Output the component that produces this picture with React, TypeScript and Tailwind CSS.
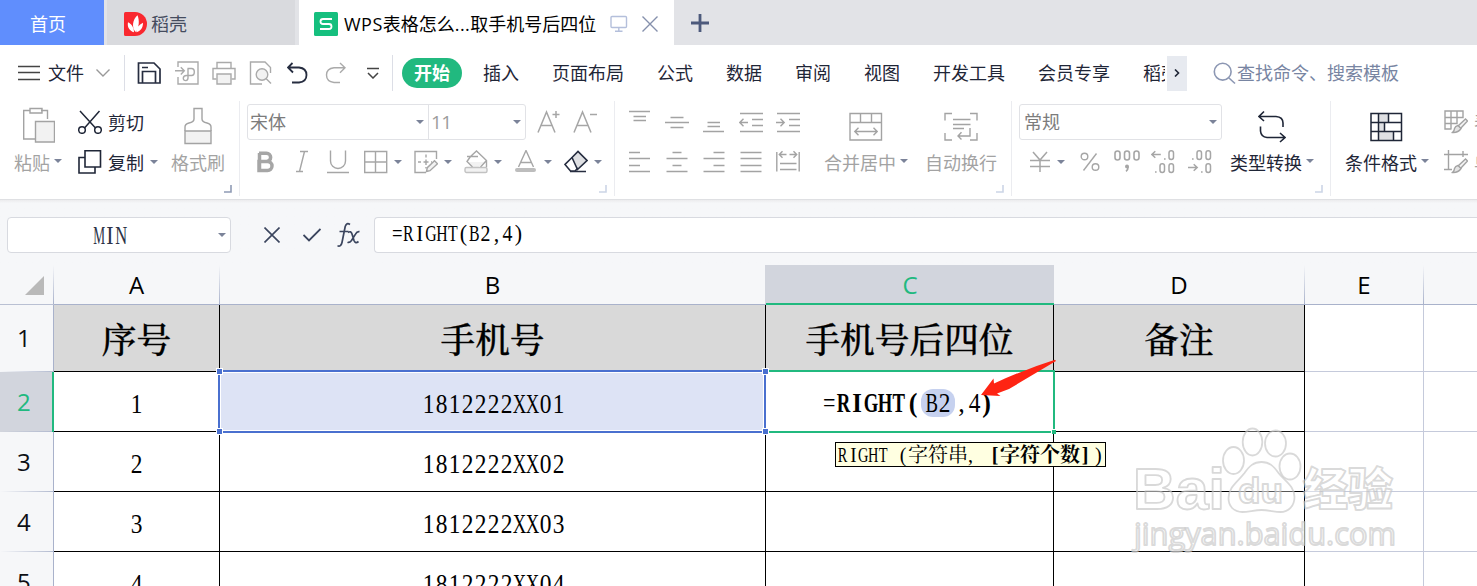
import React from "react";

type IcoProps = { w?: number; h?: number; className?: string; sw?: number; children?: React.ReactNode };

const Ico = ({ w = 24, h = 24, className = "", sw = 1.4, children }: IcoProps) => (
  <svg
    width={w}
    height={h}
    viewBox={`0 0 ${w} ${h}`}
    fill="none"
    stroke="currentColor"
    strokeWidth={sw}
    className={`shrink-0 ${className}`}
  >
    {children}
  </svg>
);

const Caret = ({ className = "ml-1.5" }: { className?: string }) => (
  <svg width="8" height="4" viewBox="0 0 8 4" className={`shrink-0 text-[#7b8399] ${className}`}>
    <path d="M0 0h8L4 4z" fill="currentColor" />
  </svg>
);

const Corner = ({ className = "text-[#ccd5e6]" }: { className?: string }) => (
  <svg width="8" height="8" viewBox="0 0 8 8" fill="none" className={`absolute right-[7px] bottom-[3px] ${className}`}>
    <path d="M7 0v7H0" stroke="currentColor" strokeWidth="1.6" />
  </svg>
);

const glyphScale = (c: string) => {
  if (c === "M") return "scale-x-[.58]";
  if (c === "I") return "scale-x-[.95]";
  if (c === "=") return "scale-x-[.85]";
  if (/[A-Z]/.test(c)) return "scale-x-[.72]";
  if (/[0-9]/.test(c)) return "scale-x-[.9]";
  return "scale-x-100";
};

/* Half-width typesetting: every character takes one cell of equal width. */
const Half = ({ text, cell = "w-[.5em]" }: { text: string; cell?: string }) => (
  <>
    {text.split("").map((c, i) => (
      <span key={i} className={`inline-block text-center whitespace-pre ${cell}`}>
        <span className={`-mx-[.2em] inline-block scale-y-[1.05] whitespace-pre ${glyphScale(c)}`}>{c}</span>
      </span>
    ))}
  </>
);

const SERIF = "font-['Liberation_Serif','Noto_Serif_CJK_SC','Noto_Sans_CJK_SC',serif]";

const TabBar = () => (
  <div className="flex h-[45px] bg-[#e2e3e7]">
    <div className="flex w-[104px] items-center bg-[#608efd] pt-[3px] pl-[30px] text-white">首页</div>
    <div className="ml-[3px] flex w-[188px] items-center bg-[#d9dade] pt-[3px] pl-[17px] text-[#454c5e]">
      <Ico w={23} h={24} sw={0}>
        <path d="M0 1.500Q0 0 1.500 0H11a12 12 0 0 1 0 24H1.500Q0 24 0 22.500z" fill="#f9282f" />
        <path d="M11.500 20C7.500 15 8.500 7.500 13.500 3.200c2 5 2 11.800-2 16.800zM10 20.200C5.500 19 3 15 4 10.200c3.800 2 6 5.500 6 10zM12.200 20.200c.4-4.500 2.600-7.500 6.800-9.500 0 5-2.300 8.500-6.800 9.500z" fill="#fff" />
      </Ico>
      <span className="ml-[4px]">稻壳</span>
    </div>
    <div className="ml-[4px] flex w-[375px] items-center bg-white pt-[3px] pl-[15px] text-black">
      <Ico w={24} h={24} sw={1.8}>
        <rect width="24" height="24" rx="1.500" fill="#15bf7e" stroke="none" />
        <path d="M18 7H9Q6.500 7 6.500 9.500T9 12h6q2.500 0 2.500 2.500T15 17H6" stroke="#fff" />
      </Ico>
      <span className="ml-[6px] w-[254px] whitespace-nowrap">
        <span className="tracking-[.5px]">WPS</span>表格怎么<span className="tracking-[.4px]">...</span>取手机号后四位
      </span>
      <Ico w={18} h={18} className="ml-[12px] text-[#b4bfdb]">
        <rect x="1" y="1.500" width="15.500" height="11" rx="1" />
        <path d="M8.800 12.500v3.500M5 16.300h7.500" />
      </Ico>
      <Ico w={16} h={16} className="ml-[14px] text-[#8590ac]">
        <path d="M.5.5l15 15M15.500.5l-15 15" />
      </Ico>
    </div>
    <Ico w={18} h={18} sw={2.8} className="mt-[14px] ml-[17px] text-[#4d5a7c]">
      <path d="M9 0v18M0 9h18" />
    </Ico>
  </div>
);

const MenuBar = () => (
  <div className="flex h-[56px] items-center whitespace-nowrap text-[#1f2637]">
    <Ico w={22} h={16} className="ml-[18px] text-[#444]">
      <path d="M0 1.500h22M0 7.500h22M0 14.500h22" />
    </Ico>
    <span className="ml-[8px]">文件</span>
    <Ico w={14} h={8} className="ml-[12px] text-[#999]">
      <path d="M.5.500 7 7 13.500.5" />
    </Ico>
    <div className="ml-[14px] h-[36px] w-px bg-[#dcdee6]" />
    <Ico w={24} h={24} sw={1.7} className="ml-[12px] text-[#262d40]">
      <path d="M1.500 2h15.500l6 6v14H1.500zM5.500 22v-11.500h13V22M5 6.500h6" />
    </Ico>
    <Ico w={24} h={24} className="ml-[14px] text-[#aaa]">
      <path d="M3 6V1h20v22H3v-7M0 9.800h9M5.800 6.200l3.500 3.600-3.500 3.600" />
      <path d="M12.500 7.500h4q2.800 0 2.800 3.500t-2.800 3.500h-5q-3.200.3-3.200 2.700t2.500 2.400q2.200-.2 2.200-2.600V7.500" />
    </Ico>
    <Ico w={24} h={24} className="ml-[13px] text-[#aaa]">
      <path d="M5 7V1.500h14V7M4.500 18H1V7.500h22V18h-3.500" />
      <path d="M5 13h14v10H5z" fill="#f2f2f2" />
    </Ico>
    <Ico w={24} h={24} className="ml-[13px] text-[#aaa]">
      <path d="M13 23H1.500V1H16l5.500 5.500V12" />
      <circle cx="13" cy="13.500" r="5.800" fill="#f2f2f2" />
      <path d="m17 17.500 5 5" />
    </Ico>
    <Ico w={21} h={22} sw={1.8} className="ml-[14px] text-[#262d40]">
      <path d="M5.500 1 1 5.500l5 5M1.500 5.500H12q7.500.8 7.500 7.500T12 20.500H5" />
    </Ico>
    <Ico w={21} h={22} className="ml-[17px] text-[#aaa]">
      <path d="M15 1l5 4.700-5 5M20 5.700H9Q1.500 6.500 1.500 13T9 20.500h6" />
    </Ico>
    <Ico w={12} h={12} sw={1.5} className="ml-[21px] text-[#444]">
      <path d="M0 1.500h12M1 6l5 5 5-5" />
    </Ico>
    <div className="ml-[13px] h-[36px] w-px bg-[#dcdee6]" />
    <div className="ml-[9px] flex h-[30px] w-[60px] items-center justify-center rounded-full bg-[#21b97f] font-bold text-white">
      开始
    </div>
    <div className="ml-[21px] flex w-[682px] gap-[33px] overflow-hidden">
      {["插入", "页面布局", "公式", "数据", "审阅", "视图", "开发工具", "会员专享", "稻壳"].map((t) => (
        <span key={t} className="shrink-0">
          {t}
        </span>
      ))}
    </div>
    <div className="ml-[2px] flex h-[35px] w-[20px] items-center justify-center bg-[#e7eaf0]">
      <Ico w={6} h={8} sw={1.6}>
        <path d="M1 .5 4.500 4 1 7.500" />
      </Ico>
    </div>
    <Ico w={23} h={23} sw={1.6} className="ml-[26px] text-[#8c97b3]">
      <circle cx="9.700" cy="9.700" r="8.400" />
      <path d="m16 16 6 5.500" />
    </Ico>
    <span className="ml-px text-[#7885a2]">查找命令、搜索模板</span>
  </div>
);

const Big = ({
  width,
  label,
  caret,
  children,
}: {
  width: string;
  label: string;
  caret?: boolean;
  children: React.ReactNode;
}) => (
  <div className={`flex shrink-0 flex-col pt-[6px] whitespace-nowrap ${width}`}>
    <div className="flex h-[36px]">{children}</div>
    <div className="flex h-[40px] items-center">
      {label}
      {caret && <Caret className="-mt-1 ml-[4px]" />}
    </div>
  </div>
);

const GROUP = "relative flex h-[95px] shrink-0 border-r border-[#ebecf0]";

const ClipboardGroup = () => (
  <div className={`${GROUP} w-[240px]`}>
    <div className="pl-[14px] text-[#a3a3a3]">
      <Big width="w-[56px]" label="粘贴" caret>
        <Ico w={32} h={36} className="ml-[9px]">
          <path d="M7 3.500H.7V32H12M18 3.500h6.500V12M7 1.500h12v4.500H7z" />
          <path d="M12.500 14.500h19v20.500h-19z" fill="#f2f2f2" />
        </Ico>
      </Big>
    </div>
    <div className="flex w-[101px] flex-col pt-[3px] pl-[8px] text-[#1f2637]">
      <div className="flex h-[36px] items-center">
        <Ico sw={1.5}>
          <path d="M2 1l15.500 17M21.500 1 6.500 18" />
          <circle cx="4" cy="20" r="3.300" />
          <circle cx="20" cy="20" r="3.300" />
        </Ico>
        <span className="ml-[6px] pt-px">剪切</span>
      </div>
      <div className="flex h-[44px] items-center">
        <Ico sw={1.6}>
          <path d="M7 7.500H1v15.500h16v-6M7 .8h15.500v16.200H7z" />
        </Ico>
        <span className="ml-[6px] pt-[2px]">复制</span>
        <Caret className="ml-[6px]" />
      </div>
    </div>
    <div className="text-[#a3a3a3]">
      <Big width="w-[56px]" label="格式刷">
        <Ico w={28} h={38} className="ml-[13px]">
          <path d="M1 24h26v12.500H1z" fill="#f2f2f2" />
          <path d="M1 24v-4q0-3 4-4 5-1 5-4V1.500h8V12q0 3 5 4 4 1 4 4v4" />
        </Ico>
      </Big>
    </div>
    <Corner className="text-[#8f9bb5]" />
  </div>
);

const FontGroup = () => (
  <div className={`${GROUP} w-[375px] flex-col pt-[3px] text-[#a6a6a6]`}>
    <div className="flex h-[36px] items-center">
      <div className="ml-[7px] flex h-[36px] w-[279px] rounded-[3px] border border-[#e1e2e6]">
        <div className="flex w-[181px] items-center justify-between border-r border-[#e1e2e6] pr-[4px] pl-[2px] text-[#7c7c7c]">
          宋体
          <Caret />
        </div>
        <div className="flex grow items-center justify-between pr-[4px] pl-[2px] text-[19px] tracking-[-.5px] text-[#9c9c9c]">
          11
          <Caret />
        </div>
      </div>
      <Ico className="ml-[11px]" sw={1.5}>
        <path d="M1 22.500 9.500 2 18 22.500M4 15.500h11M15.500 4.500h7M19 1v7" />
      </Ico>
      <Ico className="ml-[12px]" sw={1.5}>
        <path d="M1 22.500 9.500 2 18 22.500M4 15.500h11M17 4.500h7" />
      </Ico>
    </div>
    <div className="flex h-[44px] items-center">
      <Ico w={17} className="ml-[17px]" sw={3.5}>
        <path d="M2 3.200h7.500a4 4 0 0 1 0 8.300H2m0 0h8.500a4.400 4.400 0 0 1 0 9H2zM2.500 3v18" />
      </Ico>
      <Ico w={12} className="ml-[22px]">
        <path d="M4 1.500h8M8.500 1.500l-5 20M0 21.500h7" />
      </Ico>
      <Ico w={22} className="ml-[19px]">
        <path d="M3.500.5v10.500a7.500 7.500 0 0 0 15 0V.5M0 22.500h22" />
      </Ico>
      <Ico className="ml-[15px]">
        <path d="M.7 1.500h22v21H.700zM11.500 1.500v21M.7 12h22" />
      </Ico>
      <Caret />
      <Ico className="ml-[12px]">
        <path d="M22.500 9V1.500H1V22.500h11M4 12h3M9.500 12h5M12 4.500v3M12 9.500V15M12 17v1.500M17 12h1" />
        <path d="M12.500 21.500l.8-3.800 7.200-7 3 3-7.500 7z" fill="#f2f2f2" />
      </Ico>
      <Caret />
      <Ico className="ml-[12px]">
        <path d="M4 12h16l-6.500 6h-4z" fill="#f2f2f2" stroke="none" />
        <path d="M3 6.500h11M6.500 6.500l6-5.500 10 9.500V17M6.500 6.500 3 11.500l5.500 5.500M22 11l-5.500 6" />
        <rect x="1" y="17.500" width="22" height="5" rx="1.500" fill="#f2f2f2" stroke="#c2c2c2" />
      </Ico>
      <Caret />
      <Ico className="ml-[12px]">
        <path d="M4.500 17 12 .500l7.500 16.500M6.500 12.500h11" />
        <rect x="1" y="18" width="21" height="4" rx="2" fill="#bdbdbd" stroke="none" />
      </Ico>
      <Caret />
      <Ico className="ml-[12px] text-[#262d40]" sw={1.6}>
        <path d="M8 7.500 14 1.500l9 9-9.500 9z" fill="#dfe0e3" />
        <path d="M8 7.500 1 14.500l5.500 6.500h4.500l3-3M6 21.500h16" />
      </Ico>
      <Caret />
    </div>
    <Corner />
  </div>
);

const AlignGroup = () => (
  <div className={`${GROUP} w-[397px] text-[#a3a3a3]`}>
    <div className="flex w-[209px] flex-col pt-[3px] pl-[13px]">
      <div className="flex h-[36px] items-center gap-[13px]">
        <Ico>
          <path d="M1 1.500h21M5.500 6.500h12.500M5.500 10.500h12.500" />
        </Ico>
        <Ico>
          <path d="M5.500 7.500h13M0 12.500h24M5.500 17.500h13" />
        </Ico>
        <Ico>
          <path d="M5.500 12.500h12.500M5.500 16.500h12.500M1 21.500h21" />
        </Ico>
        <Ico>
          <path d="M1 3.500h23M13 9.500h11M13 15.500h11M1 21.500h23M.5 12.500h8.500M4.500 8.700.8 12.500l3.700 3.700" />
        </Ico>
        <Ico>
          <path d="M1 3.500h23M13 9.500h11M13 15.500h11M1 21.500h23M0 12.500h8.500M4.500 8.700l3.700 3.800-3.700 3.700" />
        </Ico>
      </div>
      <div className="flex h-[44px] items-center gap-[13px]">
        <Ico>
          <path d="M1 2.500h11M1 8.500h21M1 15.500h11M1 21.500h21" />
        </Ico>
        <Ico>
          <path d="M7.500 2.500h9M1.500 8.500h21M7.500 15.500h9M1.500 21.500h21" />
        </Ico>
        <Ico>
          <path d="M11.500 2.500h11M1.500 8.500h21M11.500 15.500h11M1.500 21.500h21" />
        </Ico>
        <Ico>
          <path d="M1.500 2.500h21M1.500 8.500h21M1.500 15.500h21M1.500 21.500h21" />
        </Ico>
        <Ico>
          <path d="M.8 2v19.500M23.200 2v19.500M4 13.500h16.500M4 19.500h16.500M3.500 4.500h7M13.500 4.500h7M6.500 1.200 3.300 4.500l3.200 3.300M17.500 1.200l3.200 3.300-3.200 3.300" />
        </Ico>
      </div>
    </div>
    <Big width="w-[101px]" label="合并居中" caret>
      <Ico w={34} h={36} className="ml-[25px]">
        <path d="M1 6.500h31.500v26.500H1zM1 15.500h31.500M11.500 6.500v9M22.500 6.500v9M6 24.500h22M9.500 20.800 5.800 24.500l3.700 3.700M24.500 20.800l3.700 3.700-3.700 3.700" />
      </Ico>
    </Big>
    <Big width="w-[80px]" label="自动换行">
      <Ico w={34} h={36} className="ml-[19px]">
        <path d="M8 6.500H1v7M26 6.500h7v7M8 33H1v-7M26 33h7v-7M9 12.500h17.500M9 17.500h17.500M9 21.500h11M26 21v8H14M17.500 25.300 14 29l3.500 3.500" />
      </Ico>
    </Big>
    <Corner />
  </div>
);

const NumberGroup = () => (
  <div className={`${GROUP} w-[319px] text-[#a6a6a6]`}>
    <div className="flex w-[218px] flex-col pt-[3px]">
      <div className="ml-[7px] flex h-[36px] w-[203px] items-center justify-between rounded-[3px] border border-[#e1e2e6] pr-[4px] pl-[4px] text-[#7c7c7c]">
        常规
        <Caret />
      </div>
      <div className="flex h-[44px] items-center">
        <Ico w={20} className="ml-[18px]" sw={1.5}>
          <path d="M3 2l7 8 7-8M10 10v12M0 10.500h20M0 16.500h20" />
        </Ico>
        <Caret className="ml-[7px]" />
        <Ico w={20} className="ml-[15px]" sw={1.4}>
          <circle cx="4.500" cy="6.500" r="3.300" />
          <circle cx="15.500" cy="17" r="3.300" />
          <path d="M16.500 3.500 3.500 20.500" />
        </Ico>
        <Ico w={26} className="ml-[14px]" sw={1.6}>
          <rect x="1" y="1" width="5" height="9" rx="2.500" />
          <rect x="10.500" y="1" width="5" height="9" rx="2.500" />
          <rect x="20" y="1" width="5" height="9" rx="2.500" />
          <circle cx="13" cy="16.500" r="2" fill="currentColor" stroke="none" />
          <path d="M14.200 16.500q0 3-2.200 4.800" />
        </Ico>
        <Ico w={24} className="ml-[11px]" sw={1.5}>
          <path d="M.8 4.500h9M4.300 1.200.8 4.500l3.500 3.300M13 9h1.600M4 22h1.600" />
          <rect x="18" y=".8" width="4.500" height="8.700" rx="2.200" />
          <rect x="9" y="13.800" width="4.500" height="8.700" rx="2.200" />
          <rect x="18" y="13.800" width="4.500" height="8.700" rx="2.200" />
        </Ico>
        <Ico w={24} className="ml-[13px]" sw={1.5}>
          <path d="M0 17.500h9M5.700 14.200l3.500 3.300-3.500 3.300M4 9h1.600M13 22h1.600" />
          <rect x="18" y="13.800" width="4.500" height="8.700" rx="2.200" />
          <rect x="9" y=".8" width="4.500" height="8.700" rx="2.200" />
          <rect x="18" y=".8" width="4.500" height="8.700" rx="2.200" />
        </Ico>
      </div>
    </div>
    <div className="text-[#1f2637]">
      <Big width="w-[90px]" label="类型转换" caret>
        <Ico w={28} h={36} sw={1.6} className="ml-[28px]">
          <path d="M6 4.500 1 9.500l5 4.500M1 9.500h17q7 .5 7 6.500v4M2.500 19.500V24q.5 6 6.500 6.500h17.500M22 26l5 4.500-5 4.500" />
        </Ico>
      </Big>
    </div>
    <Corner />
  </div>
);

const StyleGroup = () => (
  <div className="flex h-[95px] w-[146px] overflow-hidden pl-[14px] text-[#1f2637]">
    <Big width="w-[98px]" label="条件格式" caret>
      <Ico w={33} h={36} sw={1.5} className="ml-[25px]">
        <path d="M9 7h9v9H9zM9 16h5v9H9zM9 25h14v8H9z" fill="#dfe0e3" stroke="none" />
        <path d="M1 6.500h30.500v27H1zM1 15.500h30.500M1 24.500h30.500M8.500 6.500v27M18.500 6.500v9M14.500 15.500v9M23.500 24.500v9" />
      </Ico>
    </Big>
    <div className="flex w-[36px] flex-col pt-[3px] whitespace-nowrap text-[#a3a3a3]">
      <div className="flex h-[36px] items-center overflow-hidden">
        <Ico className="ml-px">
          <path d="M1 1h18v6.500H1zM7 1v18M13 1v12.500H1M1 7.500V19h6.500M19 1v7" />
          <path d="M14 16l7.500-7 2 2-7 7.500z" fill="#f2f2f2" />
          <path d="M14 15.500l3 3q-3 4.500-8.500 4 2-2 2-4 .8-2.500 3.500-3z" fill="#e4e4e4" />
        </Ico>
        <span className="ml-[6px]">表</span>
      </div>
      <div className="flex h-[44px] items-center overflow-hidden">
        <Ico className="ml-px">
          <path d="M0 4.500h24M4.500 0v20M0 19.500h8M19 1v6" />
          <path d="M14 16l7.500-7 2 2-7 7.500z" fill="#f2f2f2" />
          <path d="M14 15.500l3 3q-3 4.500-8.500 4 2-2 2-4 .8-2.500 3.500-3z" fill="#e4e4e4" />
        </Ico>
        <span className="ml-[6px]">单</span>
      </div>
    </div>
  </div>
);

const FormulaBar = () => (
  <div className="flex h-[65px] bg-gradient-to-b from-[#ececee] via-[#f6f7f9] via-[5%] to-[#f6f7f9] pt-[17px]">
    <div className={`ml-[7px] flex h-[36px] w-[224px] items-center rounded-[4px] border border-[#d8dae0] bg-white ${SERIF}`}>
      <div className="ml-[85px] w-[125px] pt-[3px] text-[23px] text-[#2c3347]">
        <Half text="MIN" />
      </div>
      <Caret className="ml-0" />
    </div>
    <Ico w={16} h={16} sw={1.6} className="mt-[10px] ml-[33px] text-[#3b455e]">
      <path d="M.5.5l15 15M15.500.5l-15 15" />
    </Ico>
    <Ico w={18} h={16} sw={1.8} className="mt-[10px] ml-[23px] text-[#3b455e]">
      <path d="M.5 8l5.500 5.500L17.500 2" />
    </Ico>
    <Ico w={24} h={26} sw={1.7} className="mt-[5px] ml-[16px] text-[#3b455e]">
      <path d="M13 2.500Q9.500.2 8.200 4.500L5 20.500Q4 25 .5 23.800M2.500 9.500h9" />
      <path d="M11 10.500q3-2 4 1.500l2 6.500q1.300 3.800 4.500 1M22.500 9.700q-2.500-.5-4 2.500l-4 6.300q-2 2.700-4 1.700" />
    </Ico>
    <div className={`ml-[13px] flex h-[36px] grow items-center rounded-l-[4px] border border-r-0 border-[#d8dae0] bg-white pb-[3px] pl-[17px] text-[22px] text-black ${SERIF}`}>
      <div>
        <Half text="=RIGHT(B2,4)" />
      </div>
    </div>
  </div>
);

const COLS: { name: string; w: string; head: string }[] = [
  { name: "A", w: "w-[166px]", head: "序号" },
  { name: "B", w: "w-[546px]", head: "手机号" },
  { name: "C", w: "w-[288px]", head: "手机号后四位" },
  { name: "D", w: "w-[251px]", head: "备注" },
];

const RowHead = ({ n, active }: { n: number; active?: boolean }) => (
  <div
    className={`flex w-[54px] shrink-0 flex-col border-r text-[24px] ${
      active ? "border-r-2 border-[#21b97f] bg-[#d2d5dd] text-[#21b97f]" : "border-[#a9b2cb] bg-[#f6f7f9] text-[#0d0f14]"
    }`}
  >
    <div className="flex grow items-center pl-[17px] leading-none">{n}</div>
    <div className="h-px bg-gradient-to-r from-transparent to-[#b3bbd0]" />
  </div>
);

const EmptyTail = () => (
  <>
    <div className="w-[119px] shrink-0 border-r border-b border-[#c5cadb]" />
    <div className="grow border-b border-[#c5cadb]" />
  </>
);

const Handle = ({ className }: { className: string }) => (
  <div className={`absolute h-[7px] w-[7px] border border-white bg-[#4a70cf] ${className}`} />
);

const Sheet = () => (
  <div className="relative flex h-[321px] flex-col overflow-hidden bg-white">
    <div className="flex h-[40px] shrink-0 bg-[#f6f7f9] text-[24px] text-black">
      <div className="flex w-[54px] shrink-0 border-b border-[#b9c0d3]">
        <svg width="19" height="19" viewBox="0 0 19 19" className="mt-[11px] ml-[25px]">
          <path d="M19 0v19H0z" fill="#b9b9b9" />
        </svg>
        <div className="ml-auto w-px bg-gradient-to-b from-transparent to-[#a9b2cb]" />
      </div>
      {[...COLS, { name: "E", w: "w-[119px]", head: "" }].map((c) => (
        <div
          key={c.name}
          className={`flex shrink-0 ${c.w} ${
            c.name === "C" ? "border-b-2 border-[#21b97f] bg-[#d2d5dd] text-[#21b97f]" : "border-b border-[#a9b2cb]"
          }`}
        >
          <div className="flex grow items-center justify-center pt-px leading-none">{c.name}</div>
          {c.name !== "C" && <div className={`w-px ${c.name === "B" ? "bg-[#d2d5dd]" : "bg-gradient-to-b from-transparent to-[#a9b2cb]"}`} />}
        </div>
      ))}
      <div className="grow border-b border-[#a9b2cb]" />
    </div>

    <div className="flex h-[67px] shrink-0">
      <RowHead n={1} />
      {COLS.map((c) => (
        <div
          key={c.name}
          className={`flex shrink-0 items-center justify-center border-r border-b border-black bg-[#d9d9d9] pt-[9px] text-[34.700px] leading-none font-medium text-black [-webkit-text-stroke:.3px_black] ${c.w} ${SERIF}`}
        >
          {c.head}
        </div>
      ))}
      <EmptyTail />
    </div>

    {[1, 2, 3, 4].map((n) => (
      <div key={n} className="flex h-[60px] shrink-0 text-black">
        <RowHead n={n + 1} active={n === 1} />
        <div className={`flex w-[166px] shrink-0 items-center justify-center border-r border-b border-black pt-[6px] text-[26px] leading-none ${SERIF}`}>
          <div>
            <Half text={`${n}`} />
          </div>
        </div>
        <div
          className={`flex w-[546px] shrink-0 items-center justify-center border-r border-b border-black pt-[6px] pl-[2px] text-[26px] leading-none ${
            n === 1 ? "bg-[#dde3f5]" : ""
          } ${SERIF}`}
        >
          <div>
            <Half text={`1812222XX0${n}`} />
          </div>
        </div>
        <div className={`flex w-[288px] shrink-0 items-center border-r border-b border-black pt-[4px] pl-[56px] text-[26px] leading-none ${SERIF}`}>
          {n === 1 && (
            <div className="flex items-center whitespace-nowrap">
              <span>
                <Half text="=" cell="w-[14px]" />
              </span>
              <b>
                <Half text="RIGHT(" cell="w-[14px]" />
              </b>
              <span className="mt-[-1px] ml-px rounded-[12px] bg-[#c6d1ef] px-[4px] pt-[2px]">
                <Half text="B2" cell="w-[13px]" />
              </span>
              <span>
                <Half text=",4" cell="w-[13px]" />
              </span>
              <b>
                <Half text=")" cell="w-[11px]" />
              </b>
            </div>
          )}
        </div>
        <div className="w-[251px] shrink-0 border-r border-b border-black" />
        <EmptyTail />
      </div>
    ))}

    <div className="absolute top-[105px] left-[218px] h-[63px] w-[548px] border-2 border-[#4a70cf]">
      <div className="h-full border border-white" />
    </div>
    <div className="absolute top-[105px] left-[766px] h-[63px] w-[289px] border-2 border-l-0 border-[#21b97f]" />
    <Handle className="top-[103px] left-[216px]" />
    <Handle className="top-[163px] left-[216px]" />
    <Handle className="top-[103px] left-[762px]" />
    <Handle className="top-[163px] left-[762px]" />
    <div className="absolute top-[164px] left-[1051px] h-[5px] w-[5px] border-t border-l border-white bg-[#21b97f]" />

    <div className={`absolute top-[177px] left-[835px] flex h-[25px] w-[271px] items-center border border-black bg-[#ffffe1] pl-[2px] text-[20px] leading-none whitespace-nowrap text-black ${SERIF}`}>
      <div className="w-[70px]">
        <Half text="RIGHT (" />
      </div>
      <div className="w-[82px]">字符串,</div>
      <b className="w-[105px]">
        <Half text="[" />
        字符个数
        <Half text="]" />
      </b>
      <span>)</span>
    </div>

    <svg width="80" height="45" viewBox="0 0 80 45" className="absolute top-[90px] left-[978px]">
      <path d="M3 40 15.500 23.500 16 28.500Q45 15 77 4.800L78 6 31 34l-12 4.500 3.500 2.500z" fill="#fe2413" />
    </svg>

    <svg
      width="290"
      height="135"
      viewBox="0 0 290 135"
      fill="#fff"
      fillOpacity=".35"
      stroke="#c4c4c4"
      strokeOpacity=".65"
      strokeWidth="1.800"
      strokeLinejoin="round"
      className="absolute top-[155px] left-[1122px] font-['Open_Sans','Noto_Sans_CJK_SC',sans-serif]"
    >
      <text x="11" y="89" fontSize="58" fontWeight="700" textLength="92" lengthAdjust="spacingAndGlyphs" className="font-['Liberation_Sans']">
        Bai
      </text>
      <ellipse cx="111.500" cy="40.500" rx="10.500" ry="13.500" />
      <ellipse cx="130.500" cy="22" rx="9.800" ry="13.500" />
      <ellipse cx="153.500" cy="23.500" rx="10.500" ry="13" />
      <ellipse cx="168" cy="46.500" rx="10.500" ry="13" />
      <path d="M139.500 42c8 0 12 4 17 11 6 8 16 13 16 24 0 9-6 15-14 15-6 0-12-2-19-2s-13 2-19 2c-9 0-14-6-14-14 0-11 10-17 16-25 5-7 9-11 17-11z" />
      <text x="116" y="83" fontSize="35" fontWeight="700" textLength="45" lengthAdjust="spacingAndGlyphs" className="font-['Liberation_Sans']">
        du
      </text>
      <text x="181" y="86" fontSize="45" fontWeight="900" textLength="90" lengthAdjust="spacingAndGlyphs">
        经验
      </text>
      <text x="12" y="125" fontSize="31" textLength="262" lengthAdjust="spacingAndGlyphs">
        jingyan.baidu.com
      </text>
    </svg>
  </div>
);

export default function App() {
  return (
    <div className="h-[586px] w-[1477px] overflow-hidden bg-white font-['Open_Sans','Noto_Sans_CJK_SC',sans-serif] text-[18px] leading-[24px]">
      <TabBar />
      <MenuBar />
      <div className="flex h-[99px] border-b border-[#dfe0e3]">
        <ClipboardGroup />
        <FontGroup />
        <AlignGroup />
        <NumberGroup />
        <StyleGroup />
      </div>
      <FormulaBar />
      <Sheet />
    </div>
  );
}
